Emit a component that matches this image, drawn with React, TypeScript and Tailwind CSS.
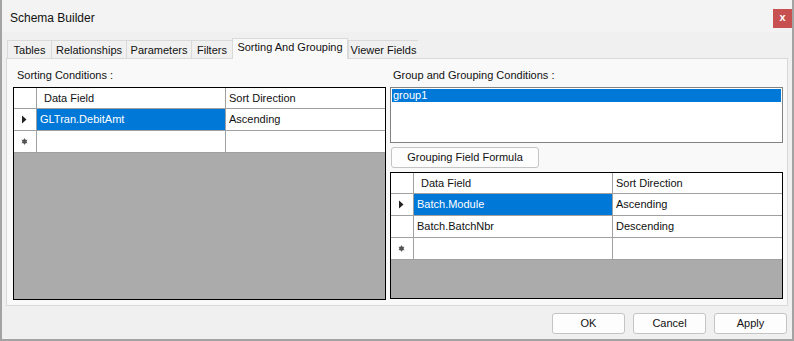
import React from 'react';

const tabs = ['Tables', 'Relationships', 'Parameters', 'Filters', 'Sorting And Grouping', 'Viewer Fields'];
const tabWidths = ['w-[44px]', 'w-[75px]', 'w-[65px]', 'w-[41px]', 'w-[116px]', 'w-[70px]'];

type Row = { field: string; dir: string; selected?: boolean };

function RowMark({ kind }: { kind: 'current' | 'new' | 'none' }) {
  if (kind === 'current') {
    return (
      <svg width="6" height="9" viewBox="0 0 6 9">
        <path d="M1 0.5 L5.5 4.5 L1 8.5 Z" fill="#222" />
      </svg>
    );
  }
  if (kind === 'new') {
    return (
      <svg width="7" height="7" viewBox="0 0 7 7">
        <circle cx="3.5" cy="3.5" r="2.2" fill="#555" />
        <path d="M3.5 0.5 V6.5 M0.8 2 L6.2 5 M0.8 5 L6.2 2" stroke="#555" strokeWidth="1" />
      </svg>
    );
  }
  return null;
}

function DataGrid({ rows, cols, height }: { rows: Row[]; cols: string; height: string }) {
  return (
    <div className={`border border-black bg-[#ababab] ${height} flex flex-col`}>
      <div className={`grid ${cols} h-[21px] bg-white border-b border-[#a0a0a0]`}>
        <div className="border-r border-[#a0a0a0]" />
        <div className="border-r border-[#a0a0a0] pl-[7px] flex items-center">Data Field</div>
        <div className="pl-[3px] flex items-center">Sort Direction</div>
      </div>
      {rows.map((r, i) => (
        <div key={i} className={`grid ${cols} h-[22px] bg-white border-b border-[#a0a0a0]`}>
          <div className="border-r border-[#a0a0a0] flex items-center justify-center pr-[2px]">
            <RowMark kind={r.selected ? 'current' : 'none'} />
          </div>
          <div
            className={`border-r border-[#a0a0a0] pl-[3px] flex items-center ${
              r.selected ? 'bg-[#0078d7] text-white' : ''
            }`}
          >
            {r.field}
          </div>
          <div className="pl-[3px] flex items-center">{r.dir}</div>
        </div>
      ))}
      <div className={`grid ${cols} h-[22px] bg-white border-b border-[#a0a0a0]`}>
        <div className="border-r border-[#a0a0a0] flex items-center justify-center pr-[2px]">
          <RowMark kind="new" />
        </div>
        <div className="border-r border-[#a0a0a0]" />
        <div />
      </div>
    </div>
  );
}

function Button({ label, width }: { label: string; width: string }) {
  return (
    <button
      className={`${width} h-[21px] rounded-[3px] border border-[#c4c4c4] bg-[#fdfdfd] text-[#111] flex items-center justify-center`}
    >
      {label}
    </button>
  );
}

export default function App() {
  return (
    <div className="w-[794px] h-[341px] bg-[#f0f0f0] border-l-2 border-r-2 border-b-2 border-[#a3a3a3] font-['Liberation_Sans',Arial,sans-serif] text-[11px] text-[#111] flex flex-col overflow-hidden">
      {/* title bar */}
      <div className="h-[32px] bg-[#f3f3f3] flex items-start justify-between">
        <div className="pl-[8px] pt-[9px] text-[12px] text-[#111]">Schema Builder</div>
        <div className="mt-[9px] w-[19px] h-[19px] bg-[#c75050] text-white font-bold text-[11px] flex items-center justify-center leading-none pb-[2px]">
          x
        </div>
      </div>

      {/* tabs */}
      <div className="pl-[5px] pt-[5px] flex items-end h-[26px]">
        {tabs.map((t, i) => {
          const active = i === 4;
          return (
            <div
              key={t}
              className={`${tabWidths[i]} flex items-center justify-center ${
                active
                  ? 'h-[21px] bg-[#f9f9f9] border border-b-0 border-[#d9d9d9] pb-[3px] relative z-10 -mb-px'
                  : 'h-[18px] border border-b-0 border-r-0 border-[#d9d9d9] pt-[1px]'
              }`}
            >
              {t}
            </div>
          );
        })}
      </div>

      {/* tab panel */}
      <div className="ml-[4px] mr-[4px] h-[248px] border border-[#d9d9d9] bg-[#f9f9f9] flex gap-[4px] pl-[6px] pr-[4px] pt-[10px]">
        <div className="w-[373px] flex flex-col">
          <div className="h-[13px] leading-[13px] pl-[4px] mb-[5px]">Sorting Conditions :</div>
          <DataGrid
            rows={[{ field: 'GLTran.DebitAmt', dir: 'Ascending', selected: true }]}
            cols="grid-cols-[23px_189px_1fr]"
            height="h-[213px]"
          />
        </div>
        <div className="flex-1 flex flex-col">
          <div className="h-[13px] leading-[13px] pl-[3px] mb-[5px]">Group and Grouping Conditions :</div>
          <div className="h-[56px] border border-[#828282] bg-white p-px">
            <div className="h-[13px] leading-[13px] bg-[#0078d7] text-white pl-[1px]">group1</div>
          </div>
          <div className="mt-[4px] ml-px">
            <Button label="Grouping Field Formula" width="w-[148px]" />
          </div>
          <div className="mt-[4px]">
            <DataGrid
              rows={[
                { field: 'Batch.Module', dir: 'Ascending', selected: true },
                { field: 'Batch.BatchNbr', dir: 'Descending' },
              ]}
              cols="grid-cols-[23px_199px_1fr]"
              height="h-[127px]"
            />
          </div>
        </div>
      </div>

      {/* footer buttons */}
      <div className="flex justify-end gap-[8px] pr-[5px] pt-[7px]">
        <Button label="OK" width="w-[73px]" />
        <Button label="Cancel" width="w-[73px]" />
        <Button label="Apply" width="w-[73px]" />
      </div>
    </div>
  );
}
